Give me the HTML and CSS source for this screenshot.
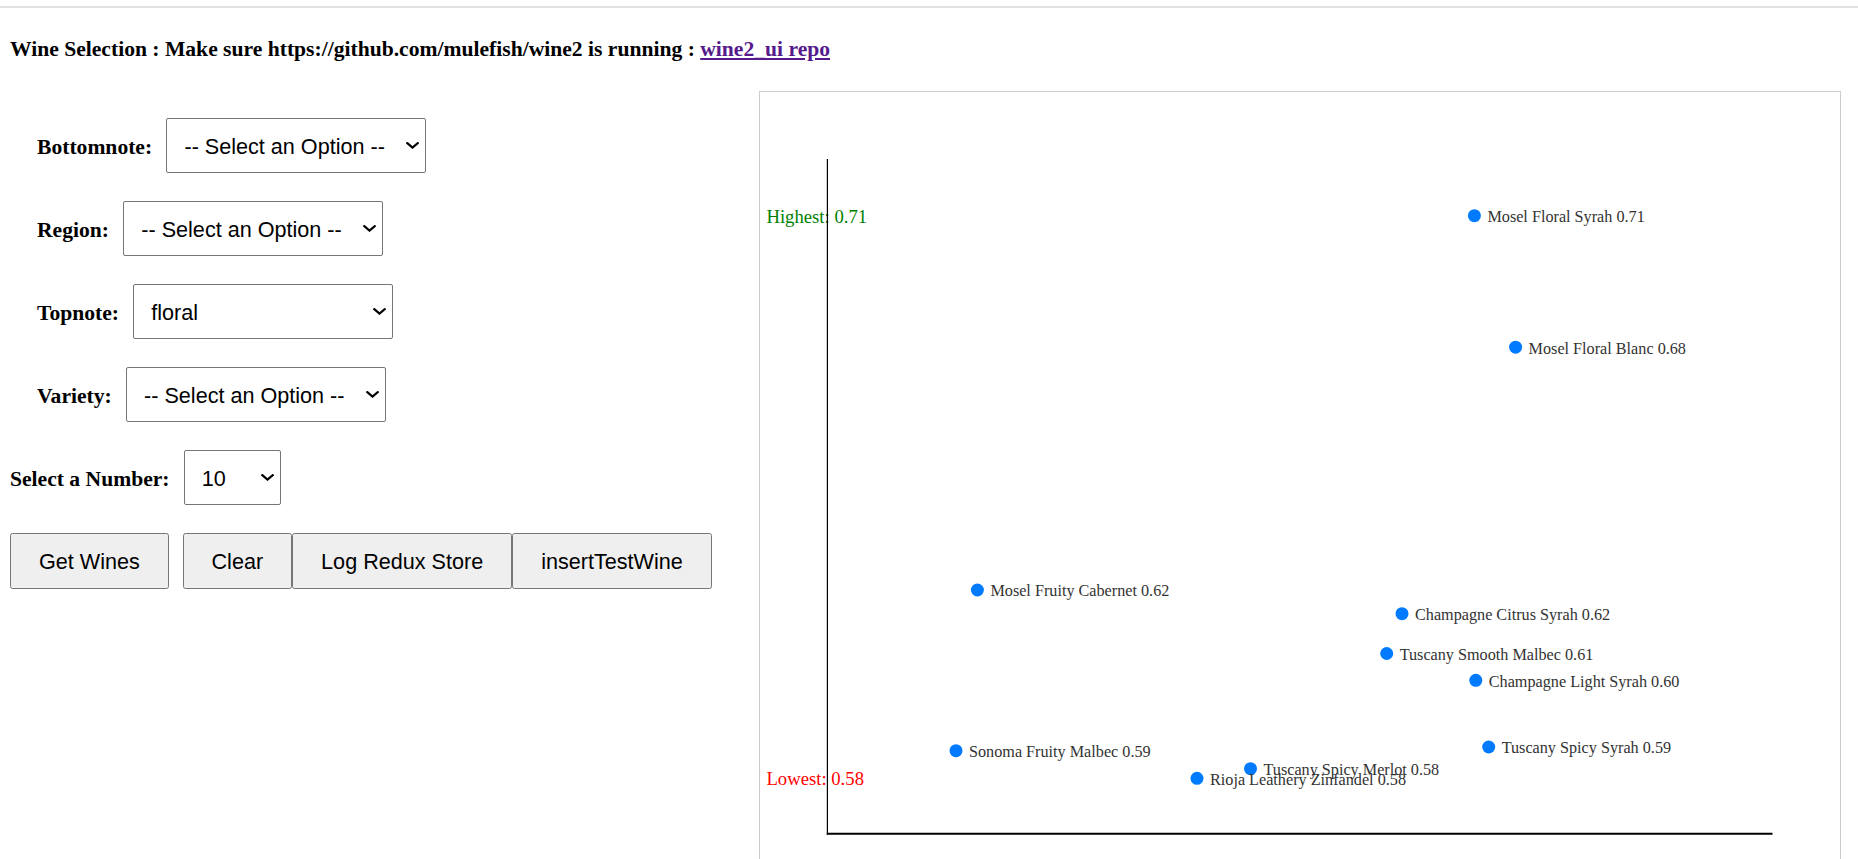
FILE: index.html
```html
<!DOCTYPE html>
<html lang="en">
<head>
<meta charset="utf-8">
<title>Wine Selection</title>
<link rel="stylesheet" href="styles.css">
</head>
<body>
<div class="topbar"></div>
<div class="page">
  <h1 class="title">Wine Selection : Make sure https://github.com/mulefish/wine2 is running : <a class="repo-link" href="#">wine2_ui repo</a></h1>
  <div class="main">
    <div class="controls">
      <div class="field field-indent">
        <label class="field-label">Bottomnote:</label>
        <span class="select-wrap"><select class="select select-wide"><option>-- Select an Option --</option></select><svg class="chevron" width="13" height="7" viewBox="0 0 13 7"><polyline points="1.3,1.2 6.5,5.6 11.7,1.2"/></svg></span>
      </div>
      <div class="field field-indent">
        <label class="field-label">Region:</label>
        <span class="select-wrap"><select class="select select-wide"><option>-- Select an Option --</option></select><svg class="chevron" width="13" height="7" viewBox="0 0 13 7"><polyline points="1.3,1.2 6.5,5.6 11.7,1.2"/></svg></span>
      </div>
      <div class="field field-indent">
        <label class="field-label">Topnote:</label>
        <span class="select-wrap"><select class="select select-wide"><option>floral</option><option>-- Select an Option --</option></select><svg class="chevron" width="13" height="7" viewBox="0 0 13 7"><polyline points="1.3,1.2 6.5,5.6 11.7,1.2"/></svg></span>
      </div>
      <div class="field field-indent">
        <label class="field-label">Variety:</label>
        <span class="select-wrap"><select class="select select-wide"><option>-- Select an Option --</option></select><svg class="chevron" width="13" height="7" viewBox="0 0 13 7"><polyline points="1.3,1.2 6.5,5.6 11.7,1.2"/></svg></span>
      </div>
      <div class="field">
        <label class="field-label">Select a Number:</label>
        <span class="select-wrap"><select class="select select-narrow"><option>10</option></select><svg class="chevron" width="13" height="7" viewBox="0 0 13 7"><polyline points="1.3,1.2 6.5,5.6 11.7,1.2"/></svg></span>
      </div>
      <div class="buttons"><button class="btn btn-first">Get Wines</button><button class="btn">Clear</button><button class="btn">Log Redux Store</button><button class="btn">insertTestWine</button></div>
    </div>
    <div class="chart">
      <svg class="chart-svg" width="1080" height="800" viewBox="0 0 1080 800">
        <text class="mark mark-high" x="6.4" y="131.3">Highest: 0.71</text>
        <text class="mark mark-low" x="6.4" y="693">Lowest: 0.58</text>
        <line class="axis-y" x1="67.4" y1="67" x2="67.4" y2="742.8"/>
        <line class="axis-x" x1="66.8" y1="741.8" x2="1012.5" y2="741.8"/>

        <circle class="dot" cx="714.4" cy="123.7" r="6.5"/>
        <text class="wine" x="727.4" y="130">Mosel Floral Syrah 0.71</text>

        <circle class="dot" cx="755.6" cy="255.2" r="6.5"/>
        <text class="wine" x="768.6" y="261.5">Mosel Floral Blanc 0.68</text>

        <circle class="dot" cx="217.4" cy="498" r="6.5"/>
        <text class="wine" x="230.4" y="504.3">Mosel Fruity Cabernet 0.62</text>

        <circle class="dot" cx="642" cy="521.7" r="6.5"/>
        <text class="wine" x="655" y="528">Champagne Citrus Syrah 0.62</text>

        <circle class="dot" cx="626.7" cy="561.5" r="6.5"/>
        <text class="wine" x="639.7" y="567.8">Tuscany Smooth Malbec 0.61</text>

        <circle class="dot" cx="715.8" cy="588.3" r="6.5"/>
        <text class="wine" x="728.8" y="594.6">Champagne Light Syrah 0.60</text>

        <circle class="dot" cx="196" cy="658.7" r="6.5"/>
        <text class="wine" x="209" y="665">Sonoma Fruity Malbec 0.59</text>

        <circle class="dot" cx="728.7" cy="655" r="6.5"/>
        <text class="wine" x="741.7" y="661.3">Tuscany Spicy Syrah 0.59</text>

        <circle class="dot" cx="490.5" cy="676.7" r="6.5"/>
        <text class="wine" x="503.5" y="683">Tuscany Spicy Merlot 0.58</text>

        <circle class="dot" cx="437" cy="686.3" r="6.5"/>
        <text class="wine" x="450" y="692.6">Rioja Leathery Zinfandel 0.58</text>
      </svg>
    </div>
  </div>
</div>
</body>
</html>
```

FILE: styles.css
```css
html, body {
  margin: 0;
  padding: 0;
  background: #ffffff;
}

body {
  font-family: "Liberation Serif", "Times New Roman", serif;
  color: #000000;
  overflow: hidden;
}

.topbar {
  margin-top: 6px;
  border-top: 2px solid #e2e2e2;
}

.page {
  padding: 0 10px;
}

.title {
  margin: 29.4px 0 0;
  font-size: 21.6px;
  line-height: 24px;
  font-weight: bold;
}

.repo-link {
  color: #551a8b;
  text-decoration: underline;
}

.main {
  display: flex;
  align-items: flex-start;
  margin-top: 29.6px;
}

.controls {
  flex: none;
  width: 749px;
  box-sizing: border-box;
  padding-top: 27.3px;
  display: flex;
  flex-direction: column;
  gap: 28px;
}

.field {
  display: flex;
  align-items: baseline;
  gap: 14px;
}

.field-indent {
  padding-left: 27px;
}

.field-label {
  font-size: 21.6px;
  font-weight: bold;
}

.select-wrap {
  position: relative;
  display: inline-flex;
}

.select {
  -webkit-appearance: none;
  appearance: none;
  font-family: "Liberation Sans", Arial, sans-serif;
  font-size: 21.6px;
  height: 55px;
  box-sizing: border-box;
  padding: 1px 0 0 17.3px;
  margin: 0;
  color: #000000;
  background: #ffffff;
  border: 1px solid #767676;
  border-radius: 2px;
}

.select-wide {
  width: 260px;
}

.select-narrow {
  width: 97px;
}

.chevron {
  position: absolute;
  right: 7px;
  top: 50%;
  margin-top: -3.5px;
  pointer-events: none;
  fill: none;
  stroke: #000000;
  stroke-width: 2.2;
  stroke-linecap: square;
}

.buttons {
  display: flex;
}

.btn {
  font-family: "Liberation Sans", Arial, sans-serif;
  font-size: 21.6px;
  height: 56px;
  padding: 1px 27px 0;
  margin: 0;
  color: #000000;
}

.btn-first {
  margin-right: 13.7px;
}

.chart {
  flex: none;
  width: 1080px;
  height: 800px;
  border: 1px solid #cccccc;
}

.chart-svg {
  display: block;
}

.mark {
  font-family: "Liberation Serif", "Times New Roman", serif;
  font-size: 18.7px;
}

.mark-high {
  fill: #008000;
}

.mark-low {
  fill: #ff0000;
}

.axis-y {
  stroke: #000000;
  stroke-width: 1.2;
}

.axis-x {
  stroke: #000000;
  stroke-width: 2;
}

.dot {
  fill: #007bff;
}

.wine {
  font-family: "Liberation Serif", "Times New Roman", serif;
  font-size: 16.2px;
  fill: #333333;
}
```
